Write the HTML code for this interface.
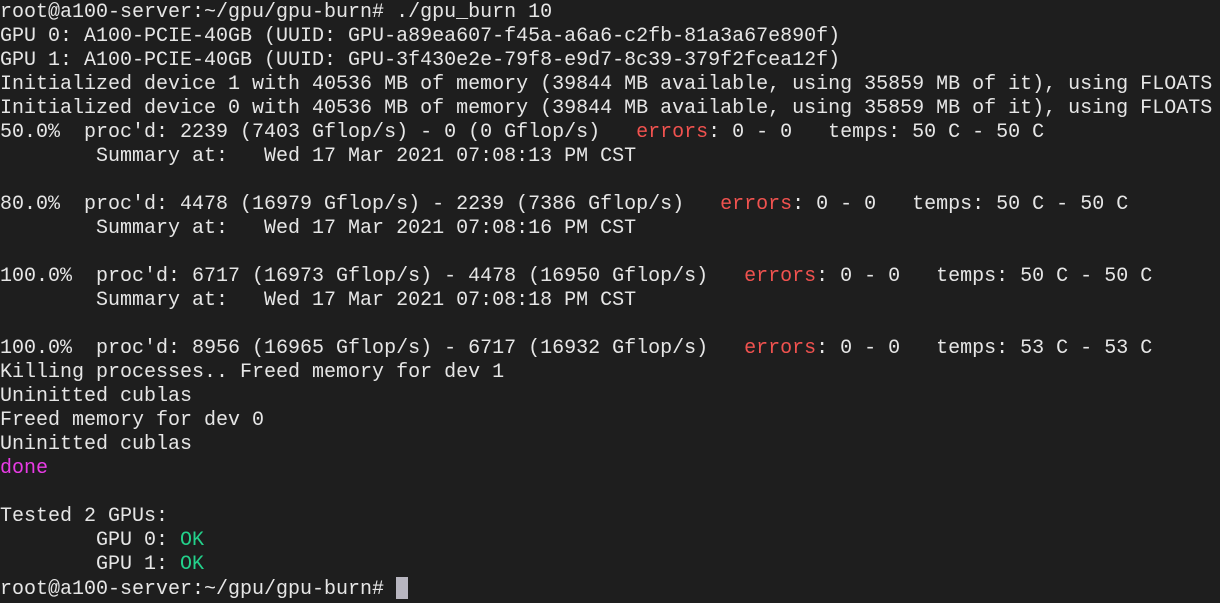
<!DOCTYPE html>
<html><head><meta charset="utf-8"><style>
html,body{margin:0;padding:0;background:#1e1e1e;width:1220px;height:603px;overflow:hidden}
pre{margin:0;padding:1px 0 0 0;font-family:"Liberation Mono","DejaVu Sans Mono",monospace;font-size:20px;line-height:24px;color:#e6e6e6;white-space:pre}
.r{color:#f0524f}.m{color:#e93be6}.g{color:#23d18b}
.c{display:inline-block;width:12px;height:22px;background:#b8b6c0;vertical-align:-5px}
</style></head><body><pre>root@a100-server:~/gpu/gpu-burn# ./gpu_burn 10
GPU 0: A100-PCIE-40GB (UUID: GPU-a89ea607-f45a-a6a6-c2fb-81a3a67e890f)
GPU 1: A100-PCIE-40GB (UUID: GPU-3f430e2e-79f8-e9d7-8c39-379f2fcea12f)
Initialized device 1 with 40536 MB of memory (39844 MB available, using 35859 MB of it), using FLOATS
Initialized device 0 with 40536 MB of memory (39844 MB available, using 35859 MB of it), using FLOATS
50.0%  proc'd: 2239 (7403 Gflop/s) - 0 (0 Gflop/s)   <span class="r">errors</span>: 0 - 0   temps: 50 C - 50 C
        Summary at:   Wed 17 Mar 2021 07:08:13 PM CST

80.0%  proc'd: 4478 (16979 Gflop/s) - 2239 (7386 Gflop/s)   <span class="r">errors</span>: 0 - 0   temps: 50 C - 50 C
        Summary at:   Wed 17 Mar 2021 07:08:16 PM CST

100.0%  proc'd: 6717 (16973 Gflop/s) - 4478 (16950 Gflop/s)   <span class="r">errors</span>: 0 - 0   temps: 50 C - 50 C
        Summary at:   Wed 17 Mar 2021 07:08:18 PM CST

100.0%  proc'd: 8956 (16965 Gflop/s) - 6717 (16932 Gflop/s)   <span class="r">errors</span>: 0 - 0   temps: 53 C - 53 C
Killing processes.. Freed memory for dev 1
Uninitted cublas
Freed memory for dev 0
Uninitted cublas
<span class="m">done</span>

Tested 2 GPUs:
        GPU 0: <span class="g">OK</span>
        GPU 1: <span class="g">OK</span>
root@a100-server:~/gpu/gpu-burn# <span class="c"></span></pre></body></html>
